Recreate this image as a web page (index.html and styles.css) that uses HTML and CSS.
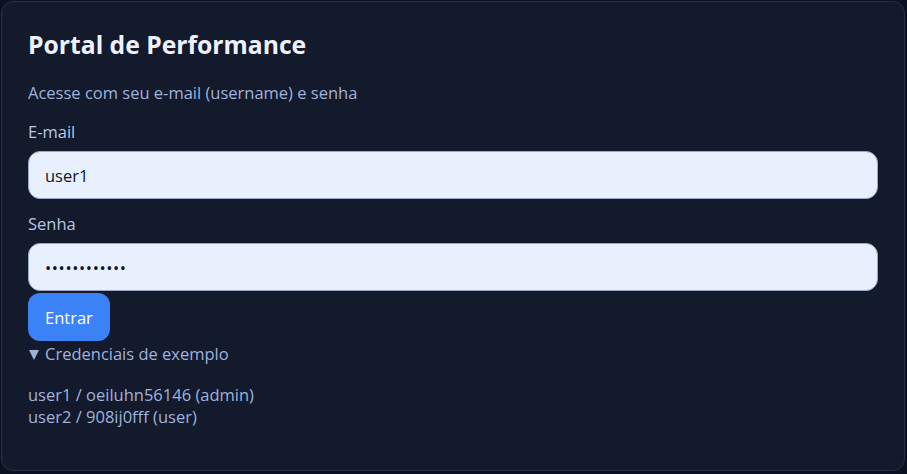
FILE: index.html
```html
<!DOCTYPE html>
<html lang="pt-BR">
<head>
<meta charset="utf-8">
<title>Portal de Performance</title>
<link rel="stylesheet" href="styles.css">
</head>
<body>
<main class="card">
  <h1 class="title">Portal de Performance</h1>
  <p class="subtitle">Acesse com seu e-mail (username) e senha</p>
  <form class="form">
    <label class="label label-first" for="email">E-mail</label>
    <input class="field" id="email" type="text" value="user1">
    <label class="label" for="senha">Senha</label>
    <input class="field field-password" id="senha" type="password" value="oeiluhn56146">
    <button class="btn" type="button">Entrar</button>
  </form>
  <details class="creds" open>
    <summary class="creds-summary">Credenciais de exemplo</summary>
    <div class="creds-body">
      <div>user1 / oeiluhn56146 (admin)</div>
      <div>user2 / 908ij0fff (user)</div>
    </div>
  </details>
</main>
</body>
</html>
```
FILE: styles.css
```css
html, body {
  margin: 0;
  padding: 0;
  background: #0b1120;
}
body {
  padding: 1px;
  font-family: "Open Sans", "Noto Sans", sans-serif;
  font-size: 16.5px;
  color: #9fb3dc;
}
.card {
  box-sizing: border-box;
  width: 904px;
  height: 470px;
  background: #131a2c;
  border: 1px solid #253049;
  border-radius: 12px;
  padding: 26px;
}
.title {
  margin: 0;
  font-size: 24.7px;
  line-height: 33px;
  font-weight: 700;
  color: #eef2ff;
}
.subtitle {
  margin: 21px 0 0;
  line-height: 22px;
  color: #9fb3dc;
}
.form {
  display: flex;
  flex-direction: column;
  align-items: flex-start;
}
.label {
  margin: 14px 0 8px;
  line-height: 22px;
  color: #b9c6e4;
}
.label-first {
  margin-top: 17px;
}
.field {
  box-sizing: border-box;
  width: 100%;
  height: 48px;
  border: 1px solid #9aa8c8;
  border-radius: 12px;
  background: #e8f0fe;
  padding: 0 16px;
  font-family: inherit;
  font-size: 16.5px;
  color: #0f172a;
  outline: none;
}
.field-password {
  letter-spacing: 0.6px;
}
.btn {
  margin-top: 2px;
  height: 48px;
  padding: 0 17px;
  border: none;
  border-radius: 12px;
  background: #3b82f6;
  color: #ffffff;
  font-family: inherit;
  font-size: 16.5px;
}
.creds {
  margin-top: 2px;
}
.creds-summary {
  display: flex;
  align-items: center;
  list-style: none;
  line-height: 22px;
  color: #9fb3dc;
  cursor: pointer;
}
.creds-summary::-webkit-details-marker {
  display: none;
}
.creds-summary::before {
  content: "";
  width: 0;
  height: 0;
  margin: 1px 6px 0 1px;
  border-left: 5px solid transparent;
  border-right: 5px solid transparent;
  border-top: 10px solid #9fb3dc;
}
.creds-body {
  margin-top: 19px;
  line-height: 22px;
  color: #9fb3dc;
}
```
